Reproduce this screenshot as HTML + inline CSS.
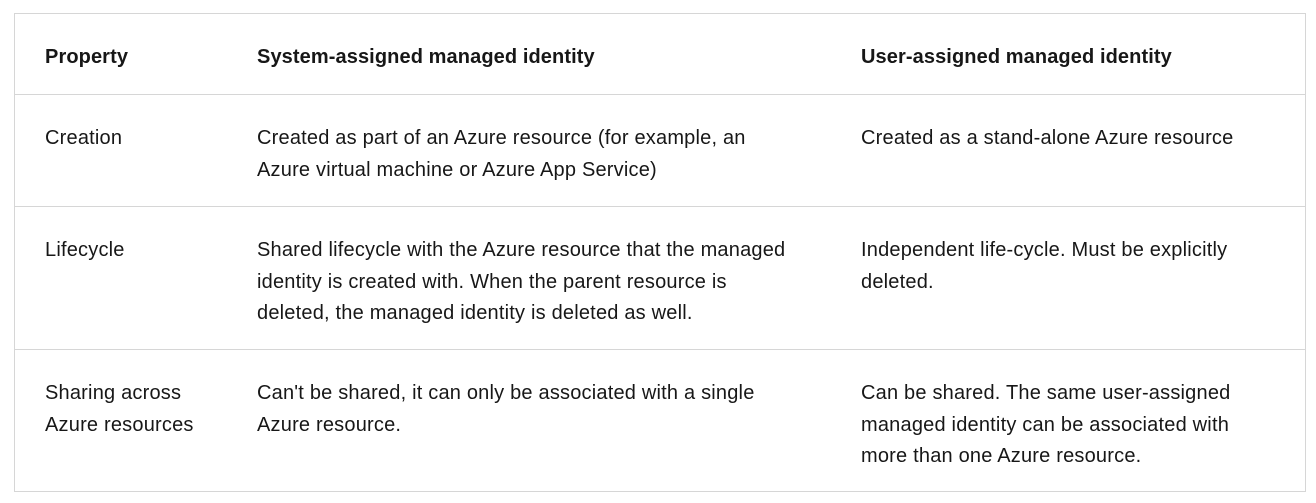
<!DOCTYPE html>
<html><head><style>
body{margin:0;width:1316px;height:503px;background:#fff;font-family:"Liberation Sans",sans-serif;color:#171717;font-size:20px;letter-spacing:0.2px;position:relative;overflow:hidden}
.box{position:absolute;left:14px;top:13px;width:1292px;height:479px;border:1px solid #d6d6d6;box-sizing:border-box}
.h{position:absolute;left:14px;width:1292px;height:1px;background:#d6d6d6}
.t{position:absolute;white-space:nowrap;line-height:31.5px}
b{font-weight:bold;letter-spacing:0.1px}
</style></head><body>
<div class="box"></div>
<div class="h" style="top:94px"></div>
<div class="h" style="top:206px"></div>
<div class="h" style="top:349px"></div>

<div class="t" style="left:45px;top:42px"><b>Property</b></div>
<div class="t" style="left:257px;top:42px"><b>System-assigned managed identity</b></div>
<div class="t" style="left:861px;top:42px"><b>User-assigned managed identity</b></div>

<div class="t" style="left:45px;top:123px">Creation</div>
<div class="t" style="left:257px;top:123px">Created as part of an Azure resource (for example, an<br>Azure virtual machine or Azure App Service)</div>
<div class="t" style="left:861px;top:123px">Created as a stand-alone Azure resource</div>

<div class="t" style="left:45px;top:235px">Lifecycle</div>
<div class="t" style="left:257px;top:235px">Shared lifecycle with the Azure resource that the managed<br>identity is created with. When the parent resource is<br>deleted, the managed identity is deleted as well.</div>
<div class="t" style="left:861px;top:235px">Independent life-cycle. Must be explicitly<br>deleted.</div>

<div class="t" style="left:45px;top:378px">Sharing across<br>Azure resources</div>
<div class="t" style="left:257px;top:378px">Can't be shared, it can only be associated with a single<br>Azure resource.</div>
<div class="t" style="left:861px;top:378px">Can be shared. The same user-assigned<br>managed identity can be associated with<br>more than one Azure resource.</div>
</body></html>
